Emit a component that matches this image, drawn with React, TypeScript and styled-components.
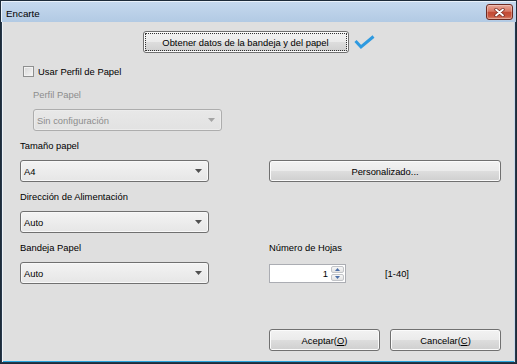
import React from 'react';
import styled, { createGlobalStyle } from 'styled-components';

const FONT = `"Liberation Sans", Arial, sans-serif`;

const GlobalStyle = createGlobalStyle`
  html, body { margin: 0; padding: 0; background: #ffffff; }
  #root { width: 517px; height: 364px; }
`;

const Window = styled.div`
  width: 517px;
  height: 364px;
  box-sizing: border-box;
  border: 1px solid #1d2b39;
  display: flex;
  flex-direction: column;
  font-family: ${FONT};
  font-size: 9.4px;
  color: #000;
  background: #dfdfdf;
`;

const TitleBar = styled.div`
  height: 21px;
  flex: none;
  display: flex;
  justify-content: space-between;
  padding: 0 3px 0 5px;
  background: linear-gradient(#c6d9ee, #b2cae4);
  box-shadow: inset 1px 1px 0 #e9f1fa;
`;

const TitleText = styled.div`
  line-height: 21px;
  padding-top: 2px;
  font-size: 9.8px;
`;

const CloseBtn = styled.div`
  width: 27px;
  height: 16px;
  box-sizing: border-box;
  margin-top: 3px;
  border: 1px solid #6d2a22;
  border-radius: 3px;
  background: linear-gradient(#e9a899 0%, #d77764 45%, #c24a35 52%, #c8563f 80%, #dc8a74 100%);
  box-shadow: inset 0 0 0 1px rgba(255, 255, 255, 0.3);
  display: flex;
  align-items: center;
  justify-content: center;
`;

const Client = styled.div`
  flex: 1;
  display: flex;
  flex-direction: column;
  border: 1px solid #26374a;
  border-top: none;
  box-shadow: inset 1px 0 0 #eef3f8, inset -1px 0 0 #c9d8e8, inset 0 -1px 0 #29a6df;
  padding-bottom: 11px;
`;

const FetchRow = styled.div`
  margin-top: 9px;
  height: 22px;
  display: flex;
  justify-content: center;
  align-items: center;
  gap: 5px;
`;

const Button = styled.button<{ $width: number; $focused?: boolean }>`
  position: relative;
  box-sizing: border-box;
  width: ${(p) => p.$width}px;
  height: 22px;
  padding: 0;
  border: 1px solid #707070;
  border-radius: 3px;
  background: linear-gradient(#f2f2f2 0%, #ebebeb 48%, #dddddd 52%, #cfcfcf 100%);
  box-shadow: inset 0 0 0 1px #fbfbfb;
  font-family: ${FONT};
  font-size: 9.4px;
  color: #000;
  &::after {
    content: '';
    display: ${(p) => (p.$focused ? 'block' : 'none')};
    position: absolute;
    inset: 1px;
    border: 1px dotted #303030;
    border-radius: 1px;
  }
`;

const CheckRow = styled.div`
  margin-top: 11px;
  height: 14px;
  padding-left: 21px;
  display: flex;
  align-items: center;
  gap: 4px;
`;

const CheckBox = styled.div`
  width: 11px;
  height: 11px;
  box-sizing: border-box;
  border: 1px solid #8e8f8f;
  background: linear-gradient(135deg, #d6d6d6, #f7f7f7);
  box-shadow: inset 0 0 0 1px #f2f2f2;
`;

const PerfilGroup = styled.div`
  margin-top: 2px;
  padding-left: 31px;
  display: grid;
  grid-template-columns: 189px;
  grid-template-rows: 29px 22px;
`;

const Form = styled.div`
  display: grid;
  grid-template-columns: 189px 232px;
  grid-template-rows: 29px 22px 29px 22px 29px 22px;
  column-gap: 60px;
  padding-left: 18px;
`;

const FieldLabel = styled.div<{ $disabled?: boolean }>`
  padding-top: 8px;
  line-height: 14px;
  color: ${(p) => (p.$disabled ? '#8d8d8d' : '#000')};
`;

const Combo = styled.div<{ $disabled?: boolean }>`
  box-sizing: border-box;
  height: 22px;
  border: 1px solid ${(p) => (p.$disabled ? '#adadad' : '#707070')};
  border-radius: 3px;
  background: ${(p) =>
    p.$disabled ? 'linear-gradient(#e8e8e8, #e2e2e2)' : 'linear-gradient(#f3f3f3, #e6e6e6)'};
  box-shadow: inset 0 0 0 1px ${(p) => (p.$disabled ? '#ececec' : '#f8f8f8')};
  color: ${(p) => (p.$disabled ? '#8d8d8d' : '#000')};
  display: flex;
  align-items: center;
  justify-content: space-between;
  padding: 0 6px 0 3px;
`;

const SpinRow = styled.div`
  display: flex;
  align-items: center;
  gap: 39px;
`;

const Spinner = styled.div`
  box-sizing: border-box;
  width: 77px;
  height: 19px;
  margin-top: 1px;
  border: 1px solid #abadb3;
  background: #fff;
  display: flex;
  padding: 1px;
`;

const SpinValue = styled.div`
  flex: 1;
  text-align: right;
  padding-right: 3px;
  line-height: 15px;
`;

const SpinButtons = styled.div`
  width: 13px;
  display: flex;
  flex-direction: column;
  gap: 1px;
`;

const SpinBtn = styled.div`
  flex: 1;
  box-sizing: border-box;
  border: 1px solid #c2c4c8;
  border-radius: 2px;
  background: linear-gradient(#f6f6f6, #e3e3e3);
  display: flex;
  align-items: center;
  justify-content: center;
`;

const Footer = styled.div`
  margin-top: auto;
  display: flex;
  justify-content: flex-end;
  gap: 10px;
  padding-right: 14px;
`;

const Arrow = ({ disabled }: { disabled?: boolean }) => (
  <svg width="7" height="4" viewBox="0 0 7 4">
    <polygon points="0,0 7,0 3.5,4" fill={disabled ? '#a4a4a4' : '#505050'} />
  </svg>
);

const SpinArrow = ({ up }: { up?: boolean }) => (
  <svg width="5" height="3" viewBox="0 0 5 3">
    <polygon points={up ? '0,3 5,3 2.5,0' : '0,0 5,0 2.5,3'} fill="#4d6fa8" />
  </svg>
);

const CheckMark = () => (
  <svg width="21" height="15" viewBox="0 0 21 15">
    <polyline
      points="1.5,6 7,12 19.5,1.5"
      fill="none"
      stroke="#2e9ae0"
      strokeWidth="3"
      strokeLinejoin="miter"
    />
  </svg>
);

const CloseX = () => (
  <svg width="11" height="9" viewBox="0 0 11 9">
    <path d="M2 1.5 L9 7.5 M9 1.5 L2 7.5" stroke="#7a2e25" strokeWidth="3.4" strokeLinecap="round" />
    <path d="M2 1.5 L9 7.5 M9 1.5 L2 7.5" stroke="#ffffff" strokeWidth="1.8" strokeLinecap="round" />
  </svg>
);

export default function App() {
  return (
    <>
      <GlobalStyle />
      <Window>
        <TitleBar>
          <TitleText>Encarte</TitleText>
          <CloseBtn>
            <CloseX />
          </CloseBtn>
        </TitleBar>
        <Client>
          <FetchRow>
            <Button $width={206} $focused>
              Obtener datos de la bandeja y del papel
            </Button>
            <CheckMark />
          </FetchRow>

          <CheckRow>
            <CheckBox />
            <span>Usar Perfil de Papel</span>
          </CheckRow>

          <PerfilGroup>
            <FieldLabel $disabled>Perfil Papel</FieldLabel>
            <Combo $disabled>
              <span>Sin configuración</span>
              <Arrow disabled />
            </Combo>
          </PerfilGroup>

          <Form>
            <FieldLabel>Tamaño papel</FieldLabel>
            <span />
            <Combo>
              <span>A4</span>
              <Arrow />
            </Combo>
            <Button $width={232}>Personalizado...</Button>
            <FieldLabel>Dirección de Alimentación</FieldLabel>
            <span />
            <Combo>
              <span>Auto</span>
              <Arrow />
            </Combo>
            <span />
            <FieldLabel>Bandeja Papel</FieldLabel>
            <FieldLabel>Número de Hojas</FieldLabel>
            <Combo>
              <span>Auto</span>
              <Arrow />
            </Combo>
            <SpinRow>
              <Spinner>
                <SpinValue>1</SpinValue>
                <SpinButtons>
                  <SpinBtn>
                    <SpinArrow up />
                  </SpinBtn>
                  <SpinBtn>
                    <SpinArrow />
                  </SpinBtn>
                </SpinButtons>
              </Spinner>
              <span>[1-40]</span>
            </SpinRow>
          </Form>

          <Footer>
            <Button $width={111}>
              Aceptar(<u>O</u>)
            </Button>
            <Button $width={111}>
              Cancelar(<u>C</u>)
            </Button>
          </Footer>
        </Client>
      </Window>
    </>
  );
}
